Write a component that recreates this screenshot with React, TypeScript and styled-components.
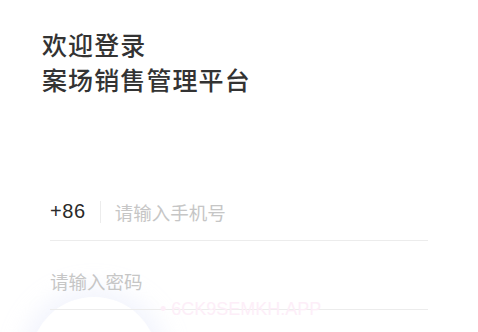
import React from 'react';
import styled, { createGlobalStyle } from 'styled-components';

const GlobalStyle = createGlobalStyle`
  html, body {
    margin: 0;
    padding: 0;
    background: #fff;
  }
  body {
    font-family: "Noto Sans CJK SC", "Noto Sans", sans-serif;
  }
`;

const Page = styled.div`
  position: relative;
  width: 478px;
  height: 332px;
  overflow: hidden;
  background: #fff;
`;

const Glow = styled.div`
  position: absolute;
  left: 30px;
  top: 297px;
  width: 128px;
  height: 128px;
  border-radius: 50%;
  background: #fff;
  box-shadow: 0 0 22px 10px rgba(222, 226, 250, 0.35);
`;

const Content = styled.div`
  position: relative;
  padding: 27px 50px 0 42px;
`;

const Title = styled.h1`
  margin: 0;
  font-size: 25px;
  line-height: 35px;
  font-weight: 500;
  letter-spacing: 1.1px;
  color: #333;
`;

const Form = styled.div`
  margin: 88px 0 0 8px;
  width: 378px;
  display: flex;
  flex-direction: column;
  gap: 13px;
`;

const Field = styled.div`
  display: flex;
  align-items: center;
  height: 56px;
  box-sizing: border-box;
  border-bottom: 1px solid #ececec;
  padding-bottom: 2px;
`;

const Prefix = styled.span`
  font-family: "Liberation Sans", Arial, sans-serif;
  font-size: 20px;
  letter-spacing: 0.6px;
  color: #2a2a2a;
`;

const Divider = styled.span`
  width: 1px;
  height: 22px;
  margin: 0 14px 0 14px;
  background: #ececec;
`;

const Placeholder = styled.span`
  font-size: 18.5px;
  color: #c6c6c6;
`;

const Watermark = styled.div`
  position: absolute;
  left: 160px;
  top: 299px;
  font-family: "Liberation Sans", Arial, sans-serif;
  font-size: 18px;
  color: #fdeef8;
  white-space: nowrap;
`;

export default function App() {
  return (
    <Page>
      <GlobalStyle />
      <Glow />
      <Content>
        <Title>
          欢迎登录
          <br />
          案场销售管理平台
        </Title>
        <Form>
          <Field>
            <Prefix>+86</Prefix>
            <Divider />
            <Placeholder>请输入手机号</Placeholder>
          </Field>
          <Field>
            <Placeholder>请输入密码</Placeholder>
          </Field>
        </Form>
      </Content>
      <Watermark>• 6CK9SEMKH.APP</Watermark>
    </Page>
  );
}
